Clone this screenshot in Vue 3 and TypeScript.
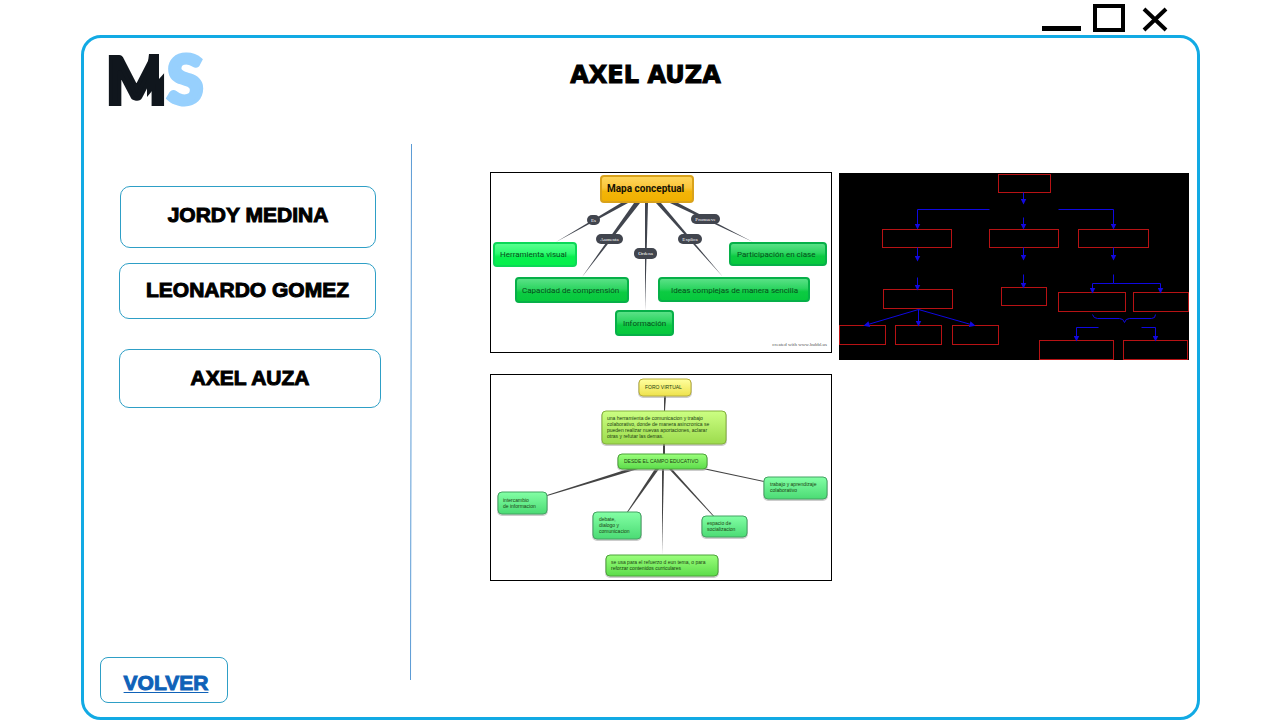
<script setup lang="ts">
interface Node { x: number; y: number; w: number; h: number; fill: string; stroke: string; lines: string[]; tx: number; ty: number }
interface Box { x: number; y: number; w: number; h: number }
interface Pill extends Box { label: string }

const people = [
  { name: 'JORDY MEDINA', kind: 'first' },
  { name: 'LEONARDO GOMEZ', kind: 'second' },
  { name: 'AXEL AUZA', kind: 'third' },
]

const conceptNodes: Node[] = [
  { x: 494, y: 243, w: 82, h: 23, fill: 'url(#bright)', stroke: '#0cd857', lines: ['Herramienta visual'], tx: 500, ty: 257 },
  { x: 516, y: 278, w: 112, h: 24, fill: 'url(#green)', stroke: '#06b048', lines: ['Capacidad de comprensión'], tx: 522, ty: 293 },
  { x: 616, y: 311, w: 57, h: 24, fill: 'url(#green)', stroke: '#06b048', lines: ['Información'], tx: 623, ty: 326 },
  { x: 659, y: 278, w: 150, h: 23, fill: 'url(#green)', stroke: '#06b048', lines: ['Ideas complejas de manera sencilla'], tx: 671, ty: 293 },
  { x: 730, y: 243, w: 96, h: 22, fill: 'url(#green)', stroke: '#06b048', lines: ['Participación en clase'], tx: 737, ty: 257 },
]
const conceptWedges = [
  '621,203 628,203 556,242', '634,203 640,203 582,277', '645,203 648,203 645,311',
  '656,203 661,203 723,277', '670,203 678,203 753,242',
]
const pills: Pill[] = [
  { x: 587, y: 215, w: 13, h: 10, label: 'Es' },
  { x: 596, y: 234, w: 27, h: 10, label: 'Aumenta' },
  { x: 634, y: 248, w: 23, h: 11, label: 'Ordena' },
  { x: 678, y: 234, w: 24, h: 10, label: 'Explica' },
  { x: 691, y: 214, w: 29, h: 10, label: 'Promueve' },
]

const forumNodes: Node[] = [
  { x: 639, y: 379, w: 52, h: 17, fill: 'url(#yellow)', stroke: '#b9b03a', lines: ['FORO VIRTUAL'], tx: 645, ty: 389 },
  { x: 602, y: 411, w: 124, h: 33, fill: 'url(#lime)', stroke: '#84b23c', lines: ['una herramienta de comunicacion y trabajo', 'colaborativo, donde de manera asincronica se', 'pueden realizar nuevas aportaciones, aclarar', 'otras y refutar las demas.'], tx: 607, ty: 420 },
  { x: 618, y: 454, w: 89, h: 15, fill: 'url(#leaf)', stroke: '#4da43a', lines: ['DESDE EL CAMPO EDUCATIVO'], tx: 624, ty: 463 },
  { x: 498, y: 492, w: 49, h: 22, fill: 'url(#mint)', stroke: '#43a463', lines: ['intercambio', 'de informacion'], tx: 503, ty: 502 },
  { x: 593, y: 512, w: 48, h: 27, fill: 'url(#mint)', stroke: '#43a463', lines: ['debate,', 'dialogo y', 'comunicacion'], tx: 599, ty: 521 },
  { x: 606, y: 555, w: 112, h: 21, fill: 'url(#leaf)', stroke: '#4da43a', lines: ['se usa para el refuerzo d eun tema, o para', 'reforzar contenidos curriculares'], tx: 611, ty: 564 },
  { x: 702, y: 516, w: 45, h: 21, fill: 'url(#mint)', stroke: '#43a463', lines: ['espacio de', 'socializacion'], tx: 707, ty: 525 },
  { x: 764, y: 477, w: 63, h: 22, fill: 'url(#mint)', stroke: '#43a463', lines: ['trabajo y aprendizaje', 'colaborativo'], tx: 770, ty: 486 },
]
const forumWedges = [
  '664,396 666,396 665,411 664,411', '663,444 665,444 665,454 663,454',
  '628,469 638,469 547,496 547,495', '655,469 659,469 628,512 627,512', '662,469 664,469 662,555',
  '669,469 672,469 714,516 713,516', '698,468 708,469 764,481 764,482',
]

const flowBoxes: Box[] = [
  { x: 998, y: 174, w: 52, h: 18 },
  { x: 882, y: 229, w: 69, h: 18 }, { x: 989, y: 229, w: 69, h: 18 }, { x: 1078, y: 229, w: 70, h: 18 },
  { x: 883, y: 289, w: 69, h: 19 }, { x: 1001, y: 287, w: 45, h: 18 },
  { x: 1058, y: 292, w: 67, h: 19 }, { x: 1133, y: 292, w: 55, h: 19 },
  { x: 839, y: 325, w: 46, h: 19 }, { x: 895, y: 325, w: 46, h: 19 }, { x: 952, y: 325, w: 46, h: 19 },
  { x: 1039, y: 340, w: 74, h: 19 }, { x: 1123, y: 340, w: 64, h: 19 },
]
const flowArrows = [
  'M1023 192V203', 'M1023 217V228', 'M989 209H917V228', 'M1058 209H1113V228',
  'M917 247V260', 'M917 277V289', 'M1023 247V259', 'M1023 274V287', 'M1113 247V259',
  'M1113 283H1092V292', 'M1113 283H1160V292', 'M918 309L864 325', 'M918 309V325', 'M918 309L974 325',
  'M1098 327H1076V340', 'M1141 327H1155V340',
]
</script>

<template>
  <div class="page">
    <div class="window-bar">
      <button class="win" type="button" aria-label="Minimizar">
        <svg width="39" height="28" viewBox="0 0 39 28"><path d="M0 24.500H39" stroke="#000" stroke-width="5" /></svg>
      </button>
      <button class="win" type="button" aria-label="Maximizar">
        <svg width="32" height="28" viewBox="0 0 32 28"><rect x="2" y="2" width="28" height="24" fill="none" stroke="#000" stroke-width="4" /></svg>
      </button>
      <button class="win close" type="button" aria-label="Cerrar">
        <svg width="26" height="28" viewBox="0 0 26 28"><path d="M2 5L24 26M24 5L2 26" stroke="#000" stroke-width="4" /></svg>
      </button>
    </div>

    <main class="frame">
      <header class="head">
        <svg class="logo" width="100" height="60" viewBox="0 0 100 60" role="img" aria-label="MS">
          <text class="logo-m" x="-2" y="56">M</text>
          <path d="M51 3H59V22L51 31Z" fill="#fff" />
          <path d="M41 6H51V36H44V43L39 49V22Z" fill="#10161d" />
          <text class="logo-s" x="59" y="56">S</text>
        </svg>
        <h1>AXEL AUZA</h1>
      </header>

      <div class="body">
        <nav class="side">
          <button v-for="p in people" :key="p.name" type="button" class="person" :class="p.kind">{{ p.name }}</button>
          <a class="back" href="#">VOLVER</a>
        </nav>

        <svg class="divider" width="3" height="536" viewBox="0 0 3 536" aria-hidden="true">
          <path d="M1.500 0L0.500 536" stroke="#5b9bd5" stroke-width="1" />
        </svg>

        <section class="gallery">
          <svg class="map" viewBox="490 172 342 181">
            <defs>
              <linearGradient id="gold" x1="0" y1="0" x2="0" y2="1"><stop offset="0" stop-color="#ffd75e" /><stop offset=".45" stop-color="#fac53a" /><stop offset=".6" stop-color="#f3b508" /><stop offset="1" stop-color="#f0b000" /></linearGradient>
              <linearGradient id="green" x1="0" y1="0" x2="0" y2="1"><stop offset="0" stop-color="#5ee28a" /><stop offset=".45" stop-color="#2dd561" /><stop offset=".6" stop-color="#0ccb42" /><stop offset="1" stop-color="#06c83c" /></linearGradient>
              <linearGradient id="bright" x1="0" y1="0" x2="0" y2="1"><stop offset="0" stop-color="#5dff92" /><stop offset=".45" stop-color="#2efb70" /><stop offset=".6" stop-color="#08f04e" /><stop offset="1" stop-color="#06f04c" /></linearGradient>
            </defs>
            <rect x="490.500" y="172.500" width="341" height="180" fill="#fff" stroke="#000" />
            <polygon v-for="w in conceptWedges" :key="w" :points="w" fill="#41454e" />
            <rect x="601" y="176" width="92" height="26" rx="3" fill="url(#gold)" stroke="#d9a21b" stroke-width="2" />
            <text class="root" x="607" y="192">Mapa conceptual</text>
            <g v-for="n in conceptNodes" :key="n.lines[0]">
              <rect :x="n.x" :y="n.y" :width="n.w" :height="n.h" rx="3" :fill="n.fill" :stroke="n.stroke" stroke-width="2" />
              <text class="concept" :x="n.tx" :y="n.ty">{{ n.lines[0] }}</text>
            </g>
            <g v-for="p in pills" :key="p.label">
              <rect :x="p.x" :y="p.y" :width="p.w" :height="p.h" rx="5" fill="#41454e" />
              <text class="pill" :x="p.x + p.w / 2" :y="p.y + 7">{{ p.label }}</text>
            </g>
            <text class="credit" x="827" y="346">created with www.bubbl.us</text>
          </svg>

          <svg class="map flow" viewBox="839 173 350 187">
            <defs>
              <marker id="tip" markerWidth="6" markerHeight="6" refX="5" refY="3" orient="auto" markerUnits="userSpaceOnUse"><path d="M0 0L6 3L0 6Z" fill="#1208e0" /></marker>
            </defs>
            <rect x="839" y="173" width="350" height="187" fill="#000" />
            <g transform="translate(.5 .5)" fill="none">
              <rect v-for="(b, i) in flowBoxes" :key="i" :x="b.x" :y="b.y" :width="b.w" :height="b.h" stroke="#b81214" />
              <path v-for="a in flowArrows" :key="a" :d="a" stroke="#0f08e0" marker-end="url(#tip)" />
              <path d="M1113 274V283" stroke="#0f08e0" />
              <path d="M1092 314Q1093 318 1097 318H1119Q1123 318 1124 322Q1125 318 1129 318H1151Q1155 318 1155 314" stroke="#0f08e0" />
            </g>
          </svg>

          <svg class="map" viewBox="490 374 342 207">
            <defs>
              <linearGradient id="yellow" x1="0" y1="0" x2="0" y2="1"><stop offset="0" stop-color="#ffffa0" /><stop offset="1" stop-color="#eee24c" /></linearGradient>
              <linearGradient id="lime" x1="0" y1="0" x2="0" y2="1"><stop offset="0" stop-color="#ccff83" /><stop offset="1" stop-color="#9cdb4d" /></linearGradient>
              <linearGradient id="leaf" x1="0" y1="0" x2="0" y2="1"><stop offset="0" stop-color="#9bff7c" /><stop offset="1" stop-color="#5cdc4a" /></linearGradient>
              <linearGradient id="mint" x1="0" y1="0" x2="0" y2="1"><stop offset="0" stop-color="#83ffa5" /><stop offset="1" stop-color="#4bdb74" /></linearGradient>
            </defs>
            <rect x="490.500" y="374.500" width="341" height="206" fill="#fff" stroke="#000" />
            <polygon v-for="w in forumWedges" :key="w" :points="w" fill="#444" />
            <g v-for="n in forumNodes" :key="n.lines[0]">
              <rect :x="n.x" :y="n.y + 1" :width="n.w" :height="n.h" rx="4" fill="none" stroke="#999" stroke-width="2" opacity=".5" />
              <rect :x="n.x" :y="n.y" :width="n.w" :height="n.h" rx="4" :fill="n.fill" :stroke="n.stroke" />
              <text v-for="(l, i) in n.lines" :key="l" class="forum" :x="n.tx" :y="n.ty + i * 6">{{ l }}</text>
            </g>
          </svg>
        </section>
      </div>
    </main>
  </div>
</template>

<style>
body { margin: 0; background: #fff; }
</style>

<style scoped>
* { box-sizing: border-box; }
.page { display: flex; flex-direction: column; min-height: 100vh; padding: 0 80px 0 81px; font-family: "Liberation Sans", Arial, sans-serif; color: #000; }
.window-bar { display: flex; justify-content: flex-end; gap: 12px; height: 35px; padding: 4px 32px 0 0; }
.win { display: block; height: 28px; padding: 0; border: 0; background: none; cursor: pointer; }
.win svg { display: block; }
.close { margin-left: 5px; }
.frame { display: flex; flex: 1; flex-direction: column; border: 3px solid #12aae4; border-radius: 20px; }
.head { display: grid; grid-template-columns: 100px 1fr 100px; align-items: start; height: 106px; padding: 10px 14px 0 24px; }
.logo { display: block; overflow: visible; }
.logo text { font-family: Lato, sans-serif; font-weight: 900; stroke-width: 4px; }
.logo .logo-m { font-size: 64px; fill: #10161d; stroke: #10161d; }
.logo .logo-s { font-size: 66px; fill: #97d0fd; stroke: #97d0fd; }
h1 { margin: 12px 0 0; font: 700 24px/30px "DejaVu Sans", Verdana, sans-serif; -webkit-text-stroke: 1px #000; text-align: center; }
.body { display: flex; flex: 1; align-items: stretch; }
.side { display: flex; flex-direction: column; align-items: flex-start; width: 326px; padding: 42px 0 14px 16px; }
.person { width: 257px; height: 56px; margin-left: 19px; padding: 0; border: 1px solid #2e9fc6; border-radius: 10px; background: #fff; color: #000; font: 700 21px/24px "Liberation Sans", Arial, sans-serif; -webkit-text-stroke: 1px #000; cursor: pointer; }
.first { width: 256px; height: 62px; margin-left: 20px; padding-bottom: 4px; }
.second { margin-top: 15px; padding-bottom: 2px; }
.third { width: 262px; height: 59px; margin-top: 30px; padding-bottom: 2px; }
.back { display: flex; justify-content: center; width: 128px; height: 46px; margin-top: auto; padding: 13px 0 0 4px; border: 1px solid #2e9fc6; border-radius: 8px; color: #0f62b8; font-size: 21px; font-weight: 700; line-height: 24px; -webkit-text-stroke: 1px #0f62b8; text-decoration: underline; text-decoration-thickness: 1px; text-underline-offset: 2px; }
.divider { display: block; flex: none; }
.gallery { display: grid; flex: 1; grid-template-columns: 342fr 350fr; column-gap: 7px; row-gap: 14px; align-content: start; align-items: start; padding: 28px 8px 0 77px; }
.map { display: block; width: 100%; height: auto; }
.flow { margin-top: 1px; }
.root { font: 700 10px Roboto, sans-serif; fill: #161204; }
.concept { font: 400 8px Roboto, sans-serif; fill: #064d1b; }
.pill { font: 400 5px "Liberation Serif", serif; fill: #fff; text-anchor: middle; }
.credit { font: 400 5px "Liberation Serif", serif; fill: #555; text-anchor: end; }
.forum { font: 400 5px "Liberation Sans", sans-serif; fill: #1c4212; }
</style>
